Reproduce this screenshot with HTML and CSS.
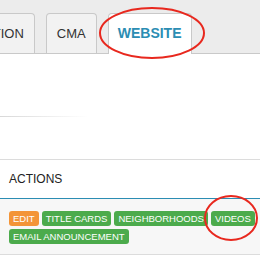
FILE: index.html
```html
<!DOCTYPE html>
<html lang="en">
<head>
    <meta charset="UTF-8">
    <title>Listing website</title>
    <link rel="stylesheet" href="styles.css">
</head>
<body>

<div class="tabbar">
    <ul class="tabs">
        <li class="tab">DESCRIPTION</li>
        <li class="tab">CMA</li>
        <li class="tab active">WEBSITE</li>
    </ul>
</div>

<div class="content">
    <div class="fade-rule"></div>

    <div class="panel">
        <div class="panel-head">ACTIONS</div>
        <div class="panel-body">
            <span class="badge orange">EDIT</span>
            <span class="badge">TITLE CARDS</span>
            <span class="badge">NEIGHBORHOODS</span>
            <span class="badge">VIDEOS</span>
            <span class="badge">EMAIL ANNOUNCEMENT</span>
        </div>
    </div>
</div>

<svg class="marks" width="260" height="260" viewBox="0 0 260 260">
    <ellipse cx="152" cy="33" rx="52" ry="25" />
    <ellipse cx="231" cy="218" rx="26" ry="22" />
</svg>

</body>
</html>
```

FILE: styles.css
```css
body {
    margin: 0;
    width: 260px;
    height: 260px;
    overflow: hidden;
    position: relative;
    background: #fff;
    font-family: "Liberation Sans", Arial, sans-serif;
    color: #333;
}

.tabbar {
    height: 53px;
    background: #ececec;
    border-bottom: 1px solid #c9c9c9;
}

.tabs {
    display: flex;
    align-items: flex-end;
    height: 53px;
    margin: 0 0 0 -76px;
    padding: 0;
    list-style: none;
}

.tab {
    box-sizing: border-box;
    height: 40px;
    line-height: 39px;
    padding: 0 10px;
    margin-right: 11px;
    background: #f2f2f2;
    border: 1px solid #c9c9c9;
    border-bottom: none;
    border-radius: 4px 4px 0 0;
    font-size: 13px;
    white-space: nowrap;
}

.tab.active {
    position: relative;
    height: 41px;
    margin-bottom: -1px;
    padding: 0 9px 1px;
    background: #fff;
    color: #2b8db3;
    font-weight: bold;
    font-size: 14px;
}

.fade-rule {
    width: 88px;
    height: 1px;
    margin-top: 62px;
    background: linear-gradient(to right, #d8d8d8, #fff);
}

.panel {
    margin-top: 42px;
}

.panel-head {
    height: 38px;
    line-height: 38px;
    padding-left: 9px;
    border-top: 1px solid #dcdcdc;
    border-bottom: 1px solid #2b8db3;
    font-size: 12px;
    color: #222;
}

.panel-body {
    display: flex;
    flex-wrap: wrap;
    gap: 3px;
    padding: 12px 2px 10px 9px;
    background: #f7f7f7;
    border-bottom: 1px solid #dcdcdc;
}

.badge {
    height: 15px;
    line-height: 15px;
    padding: 0 4px;
    border-radius: 3px;
    background: #4cab4c;
    color: #fff;
    font-size: 9.5px;
    white-space: nowrap;
}

.badge.orange {
    background: #f39437;
}

.marks {
    position: absolute;
    left: 0;
    top: 0;
    pointer-events: none;
}

.marks ellipse {
    fill: none;
    stroke: #e8281e;
    stroke-width: 2;
}
```
